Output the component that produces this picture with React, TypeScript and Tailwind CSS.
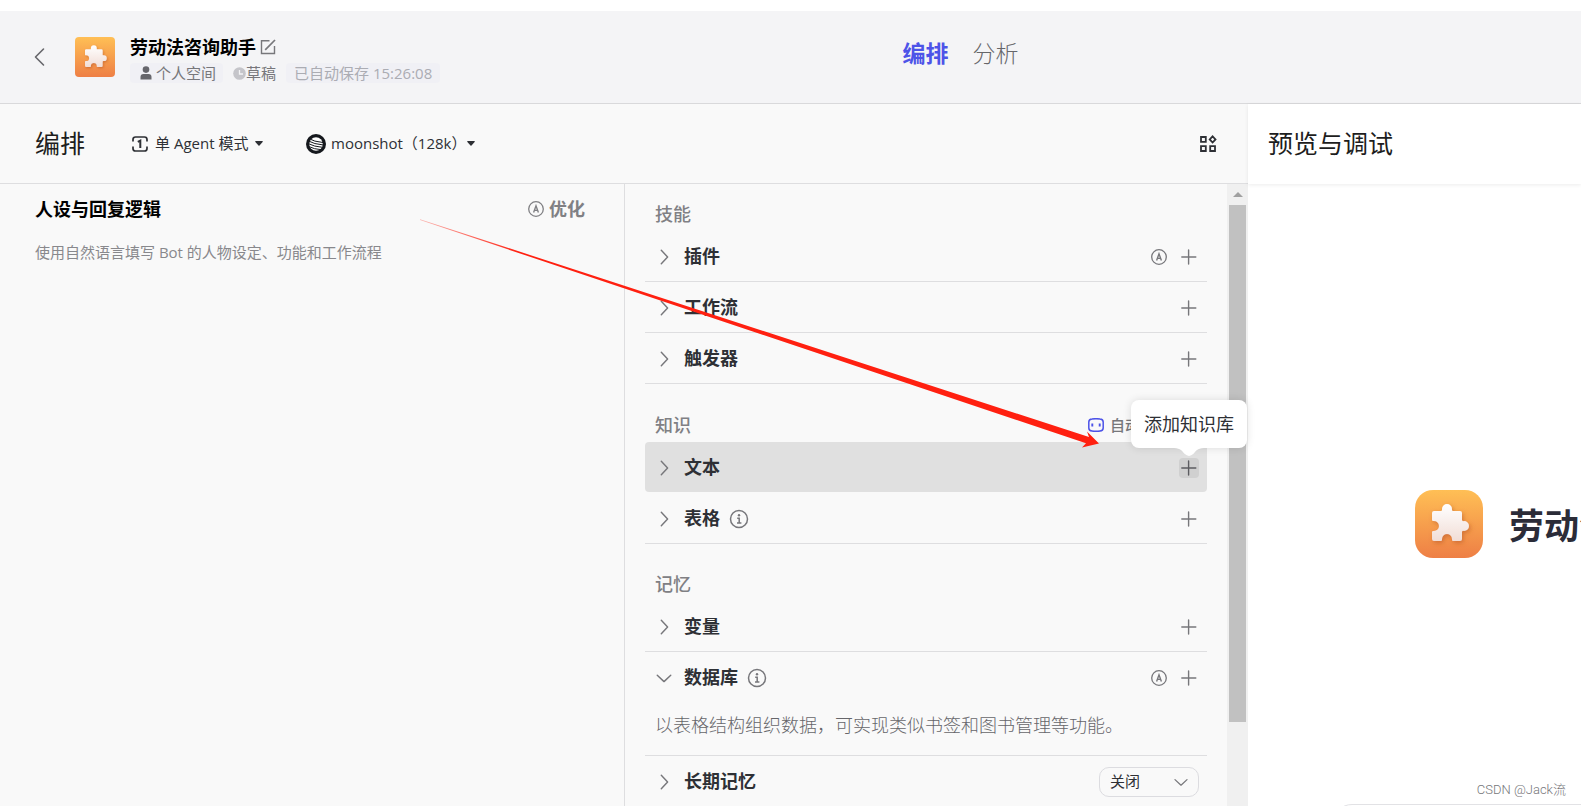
import { useState } from "react";

type RowProps = {
  title: string;
  info?: boolean;
  auto?: boolean;
  open?: boolean;
  active?: boolean;
  children?: React.ReactNode;
};

function BotLogo({ id, className }: { id: string; className: string }) {
  return (
    <svg viewBox="0 0 68 68" className={className} aria-hidden="true">
      <defs>
        <linearGradient id={`${id}-bg`} x1="0" y1="0" x2="0" y2="1">
          <stop offset="0" stopColor="#ffbf55" />
          <stop offset="1" stopColor="#ee7f45" />
        </linearGradient>
        <linearGradient id={`${id}-piece`} x1="0" y1="0" x2="0" y2="1">
          <stop offset="0" stopColor="#ffffff" />
          <stop offset="1" stopColor="#f1ddd6" />
        </linearGradient>
        <filter id={`${id}-shadow`} x="-30%" y="-30%" width="170%" height="170%">
          <feDropShadow dx="1.5" dy="2" stdDeviation="2" floodColor="#b0501c" floodOpacity="0.5" />
        </filter>
      </defs>
      <rect width="68" height="68" fill={`url(#${id}-bg)`} />
      <path
        d="M19 21H26Q27.6 21 27 19A5 5 0 1 1 37 19Q36.4 21 38 21H45A2 2 0 0 1 47 23V30Q47 31.6 49 31A5 5 0 1 1 49 41Q47 40.4 47 42V49A2 2 0 0 1 45 51H38Q36.6 51 37 49A5 5 0 1 0 27 49Q27.4 51 26 51H19A2 2 0 0 1 17 49V42Q17 40.6 19 41A5 5 0 1 0 19 31Q17 31.4 17 30V23A2 2 0 0 1 19 21Z"
        fill={`url(#${id}-piece)`}
        filter={`url(#${id}-shadow)`}
      />
    </svg>
  );
}

function Chevron({ dir, className }: { dir: "left" | "right" | "down"; className: string }) {
  const paths = {
    left: "M12.5 2 4.5 10l8 8",
    right: "M7 2.5 14 10l-7 7.5",
    down: "M2.5 7 10 14l7.5-7",
  };
  return (
    <svg viewBox="0 0 20 20" className={className} fill="none" stroke="currentColor" strokeLinecap="round" aria-hidden="true">
      <path d={paths[dir]} strokeWidth="1.6" strokeLinejoin="round" />
    </svg>
  );
}

function Caret() {
  return (
    <svg viewBox="0 0 8 5" className="h-[5px] w-2 shrink-0" fill="currentColor" aria-hidden="true">
      <path d="M.8 0h6.4a.6.6 0 0 1 .45 1L4.5 4.6a.7.7 0 0 1-1 0L.35 1A.6.6 0 0 1 .8 0Z" />
    </svg>
  );
}

function AutoIcon() {
  return (
    <svg viewBox="0 0 16 16" className="size-4 shrink-0" fill="none" stroke="currentColor" aria-hidden="true">
      <circle cx="8" cy="8" r="7.3" strokeWidth="1.3" />
      <path d="M5.6 11.4 8 4.8l2.4 6.6M6.4 9.4h3.2" strokeWidth="1.4" />
    </svg>
  );
}

function PlusIcon() {
  return (
    <svg viewBox="0 0 16 16" className="size-4" fill="none" stroke="currentColor" strokeWidth="1.4" strokeLinecap="round" aria-hidden="true">
      <path d="M7.6 1v14M.8 8h14" />
    </svg>
  );
}

function InfoIcon() {
  return (
    <svg viewBox="0 0 20 20" className="size-5 shrink-0" fill="none" stroke="currentColor" aria-hidden="true">
      <circle cx="10" cy="10" r="8.5" strokeWidth="1.5" />
      <circle cx="10" cy="6.2" r="1.2" fill="currentColor" stroke="none" />
      <path d="M8.2 9.2h2V14M8 14h4.4" strokeWidth="1.5" />
    </svg>
  );
}

function Row({ title, info, auto, open, active, children }: RowProps) {
  const [expanded, setExpanded] = useState(!!open);

  return (
    <div className={`border-b ${active ? "border-transparent" : "border-[#dedee0]"}`}>
      <div
        className={`flex h-[50px] items-center pt-px pr-2 pl-[10px] ${
          active ? "rounded-[4px] bg-[#e0e0e0]" : ""
        }`}
      >
        <button
          onClick={() => setExpanded(!expanded)}
          aria-expanded={expanded}
          className="flex items-center gap-[11px] text-[#2e3035]"
        >
          <Chevron dir={expanded ? "down" : "right"} className="size-[18px] text-[#77777b]" />
          <span className="text-[18px] font-bold">{title}</span>
        </button>
        {info && (
          <span className="ml-[9px] text-[#77777b]">
            <InfoIcon />
          </span>
        )}
        <div className="ml-auto flex items-center gap-3 text-[#77777b]">
          {children}
          {auto && (
            <button aria-label={`自动添加${title}`}>
              <AutoIcon />
            </button>
          )}
          {!children && (
            <div className="relative">
              <button
                aria-label={`添加${title}`}
                className={`flex size-5 items-center justify-center rounded-[4px] ${
                  active ? "bg-[#d0d0d0] text-[#5c5c60]" : ""
                }`}
              >
                <PlusIcon />
              </button>
              {active && (
                <div
                  role="tooltip"
                  className="absolute -right-12 bottom-[30px] z-10 rounded-lg bg-white px-[13px] py-[10px] text-[18px] leading-7 whitespace-nowrap text-[#2e3035] shadow-[0_0_8px_rgba(0,0,0,0.12)]"
                >
                  添加知识库
                  <svg viewBox="0 0 30 8" className="absolute top-full right-[43px] h-2 w-[30px]" fill="#fff" aria-hidden="true">
                    <path d="M0 0h30c-7 .3-8 3-10.5 5.8Q15 10 10.5 5.8C8 3 7 .3 0 0Z" />
                  </svg>
                </div>
              )}
            </div>
          )}
        </div>
      </div>
      {expanded && title === "数据库" && (
        <p className="h-[53px] pt-2 pl-[10px] text-[18px] leading-[30px] font-light whitespace-nowrap text-[#66666a]">
          以表格结构组织数据，可实现类似书签和图书管理等功能。
        </p>
      )}
    </div>
  );
}

function GroupTitle({ children }: { children: React.ReactNode }) {
  return <h3 className="pl-[10px] text-[18px] font-medium text-[#808084]">{children}</h3>;
}

function Header() {
  return (
    <header className="grid h-[93px] shrink-0 grid-cols-[1fr_auto_1fr] items-center border-b border-[#d9d9db] bg-[#f4f4f6]">
      <div className="flex items-center">
        <button aria-label="返回" className="ml-[31px] text-[#66666a]">
          <Chevron dir="left" className="size-5" />
        </button>
        <BotLogo id="small" className="ml-6 size-10 rounded-[4px]" />
        <div className="ml-[15px] pt-[2px]">
          <div className="flex items-center gap-1">
            <h1 className="text-[18px] leading-7 font-bold text-black">劳动法咨询助手</h1>
            <button aria-label="编辑" className="text-[#77777b]">
              <svg viewBox="0 0 16 16" className="size-4" fill="none" stroke="currentColor" strokeWidth="1.4" aria-hidden="true">
                <path d="M9.5 1.7H1.5V14.500H14.5V7" />
                <path d="M5.2 10.800 15 1" strokeWidth="1.7" />
              </svg>
            </button>
          </div>
          <div className="mt-[2px] flex h-5 items-center gap-[10px] text-[15px] leading-5 text-[#77777b]">
            <span className="flex items-center gap-1 rounded-[4px] bg-[#f0f0f5] pr-[7px] pl-[10px]">
              <svg viewBox="0 0 12 14" className="h-[14px] w-3" fill="#66666c" aria-hidden="true">
                <circle cx="6" cy="3.6" r="3.3" />
                <path d="M.5 13.500V11Q.5 8 3.5 8h5q3 0 3 3v2.500Z" />
              </svg>
              个人空间
            </span>
            <span className="flex items-center">
              <svg viewBox="0 0 13 13" className="size-[13px]" aria-hidden="true">
                <circle cx="6.5" cy="6.5" r="6.3" fill="#c5c5ca" />
                <path d="M6.5 3v4h3.500" fill="none" stroke="#f4f4f6" strokeWidth="1.3" />
              </svg>
              草稿
            </span>
            <span className="rounded-[4px] bg-[#f0f0f5] px-2 text-[#abacb3]">
              已自动保存 15:26:08
            </span>
          </div>
        </div>
      </div>
      <nav className="ml-[340px] flex gap-6 pb-2 text-[23px] leading-8">
        <a href="#arrange" className="font-bold text-[#4d53e8]">编排</a>
        <a href="#analysis" className="font-light text-[#66666a]">分析</a>
      </nav>
    </header>
  );
}

function Toolbar() {
  return (
    <div className="flex h-20 shrink-0 items-center border-b border-[#dedee0] pl-[35px] text-[#2e3035]">
      <h2 className="text-[25px] text-[#1d1d20]">编排</h2>
      <label className="ml-[46px] flex items-center gap-[6px]">
        <svg viewBox="0 0 18 18" className="size-[18px]" fill="none" stroke="currentColor" strokeWidth="1.7" aria-hidden="true">
          <path d="M2 6.500V4.500Q2 2 4.500 2h9Q16 2 16 4.500v2M2 11.500v2Q2 16 4.500 16h9q2.500 0 2.500-2.500v-2" />
          <path d="M6.800 6.800 9.300 5.600V13" strokeWidth="2" />
        </svg>
        <select aria-label="模式" className="appearance-none bg-transparent text-[15px]">
          <option>单 Agent 模式</option>
        </select>
        <Caret />
      </label>
      <label className="ml-[43px] flex items-center gap-[5px]">
        <svg viewBox="0 0 20 20" className="size-5" aria-hidden="true">
          <circle cx="10" cy="10" r="10" fill="#15181d" />
          <circle cx="10" cy="10" r="6.8" fill="#fff" />
          <path
            d="M2 4.200Q8 7.800 17.500 8.600M2 6.800Q8 10.200 17.500 11M2 9.500Q8 12.700 17 13.400M2 12.200Q8 15.300 16 15.800"
            fill="none"
            stroke="#15181d"
            strokeWidth="1"
          />
        </svg>
        <select aria-label="模型" className="-mr-[5px] appearance-none bg-transparent text-[15px]">
          <option>moonshot（128k）</option>
        </select>
        <Caret />
      </label>
      <button aria-label="布局" className="mr-[31px] ml-auto">
        <svg viewBox="0 0 18 18" className="size-[18px]" fill="none" stroke="currentColor" strokeWidth="1.8" aria-hidden="true">
          <path d="M2 2h4.800v4.800H2ZM2 11.200h4.800V16H2ZM11.200 11.200H16V16h-4.800ZM13.600 1.300 16.500 4.400 13.600 7.500 10.700 4.400Z" />
        </svg>
      </button>
    </div>
  );
}

function PromptPanel() {
  return (
    <section className="border-r border-[#dedee0] pl-[35px]">
      <div className="flex h-[50px] items-center justify-between pr-[39px]">
        <h3 className="text-[18px] font-bold text-black">人设与回复逻辑</h3>
        <button className="flex items-center gap-[5px] text-[18px] font-bold text-[#808084]">
          <AutoIcon />
          优化
        </button>
      </div>
      <textarea
        aria-label="人设与回复逻辑"
        placeholder="使用自然语言填写 Bot 的人物设定、功能和工作流程"
        className="mt-2 h-80 w-full resize-none bg-transparent text-[15px] leading-5 outline-none placeholder:text-[#88888c]"
      />
    </section>
  );
}

function SkillPanel() {
  return (
    <section className="flex min-w-0">
      <div className="min-w-0 flex-1 pt-[13px] pr-5 pl-5">
        <div className="flex h-[34px] items-center">
          <GroupTitle>技能</GroupTitle>
        </div>
        <Row title="插件" auto />
        <Row title="工作流" />
        <Row title="触发器" />

        <div className="mt-6 flex h-[34px] items-center justify-between">
          <GroupTitle>知识</GroupTitle>
          <button className="flex items-center gap-[6px] pr-[15px] text-[15px] leading-8 font-medium text-[#77777b]">
            <svg viewBox="0 0 16 14" className="h-[14px] w-4" fill="none" stroke="#4d53e8" aria-hidden="true">
              <path d="M4 1Q8 .4 12 1 15.200 1.200 15.200 4v6q0 2.800-3.200 3-4 .6-8 0Q.8 12.800.8 10V4Q.8 1.200 4 1Z" strokeWidth="1.5" />
              <path d="M4.300 5.500v3M11.700 5.500v3" strokeWidth="1.9" />
            </svg>
            自动调用
            <Chevron dir="down" className="size-4" />
          </button>
        </div>
        <Row title="文本" active />
        <Row title="表格" info />

        <div className="mt-[23px] flex h-[34px] items-center">
          <GroupTitle>记忆</GroupTitle>
        </div>
        <Row title="变量" />
        <Row title="数据库" info auto open />
        <Row title="长期记忆">
          <div className="relative">
            <select
              aria-label="长期记忆"
              className="h-[30px] w-[100px] appearance-none rounded-[10px] border border-[#dcdce0] bg-transparent px-[10px] text-[15px] text-[#2e3035]"
            >
              <option>关闭</option>
              <option>开启</option>
            </select>
            <Chevron dir="down" className="pointer-events-none absolute top-[7px] right-[10px] size-4" />
          </div>
        </Row>
      </div>
      <div className="flex w-[21px] shrink-0 flex-col items-center bg-[#f0f0f0]" aria-hidden="true">
        <div className="flex h-[21px] shrink-0 items-center">
          <svg viewBox="0 0 10 5" className="h-[5px] w-[10px]" fill="#a0a0a0">
            <path d="M5 0 10 5H0Z" />
          </svg>
        </div>
        <div className="h-[83%] w-[17px] bg-[#c1c1c1]" />
      </div>
    </section>
  );
}

function Preview() {
  return (
    <section className="flex min-w-0 flex-col bg-white">
      <div className="flex h-20 shrink-0 items-center pl-5 shadow-[0_1px_4px_rgba(0,0,0,0.08)]">
        <h2 className="text-[25px] text-[#1d1d20]">预览与调试</h2>
      </div>
      <div className="flex flex-1 items-center gap-[26px] pt-[60px] pl-[167px]">
        <BotLogo id="large" className="size-[68px] shrink-0 rounded-[18px]" />
        <h2 className="pt-1 text-[35px] font-bold whitespace-nowrap text-[#2b2c38]">劳动法咨询助手</h2>
      </div>
      <div className="ml-[84px] h-[2px] shrink-0">
        <input aria-label="消息" className="h-12 w-[480px] rounded-[20px] border border-[#e2e2e5]" />
      </div>
    </section>
  );
}

// Pointer from the prompt panel to the add button of the text knowledge row
function PointerArrow() {
  return (
    <svg className="pointer-events-none absolute inset-0 z-20 size-full" aria-hidden="true">
      <defs>
        <linearGradient id="pointer" gradientUnits="userSpaceOnUse" x1="420" y1="219" x2="520" y2="252">
          <stop offset="0" stopColor="#ff2010" stopOpacity="0.3" />
          <stop offset="1" stopColor="#ff2010" />
        </linearGradient>
      </defs>
      <path d="M420 219.200 1089 437 1087 431.500 1099 443.500 1082 447.500 1086 443.200 420 219.900Z" fill="url(#pointer)" />
    </svg>
  );
}

export default function App() {
  return (
    <div className="relative flex h-screen flex-col overflow-hidden bg-white pt-[11px] font-['Open_Sans','Noto_Sans_CJK_SC',sans-serif]">
      <Header />
      <main className="grid min-h-0 flex-1 grid-cols-[minmax(0,1fr)_333px]">
        <div className="flex min-h-0 flex-col bg-[#f9f9f9]">
          <Toolbar />
          <div className="grid min-h-0 flex-1 grid-cols-[625fr_623fr]">
            <PromptPanel />
            <SkillPanel />
          </div>
        </div>
        <Preview />
      </main>
      <PointerArrow />
      <span className="absolute right-[15px] bottom-2 font-[Roboto,'Noto_Sans_CJK_SC',sans-serif] text-[13px] leading-4 font-light text-[#77777b]">
        CSDN @Jack流
      </span>
    </div>
  );
}
